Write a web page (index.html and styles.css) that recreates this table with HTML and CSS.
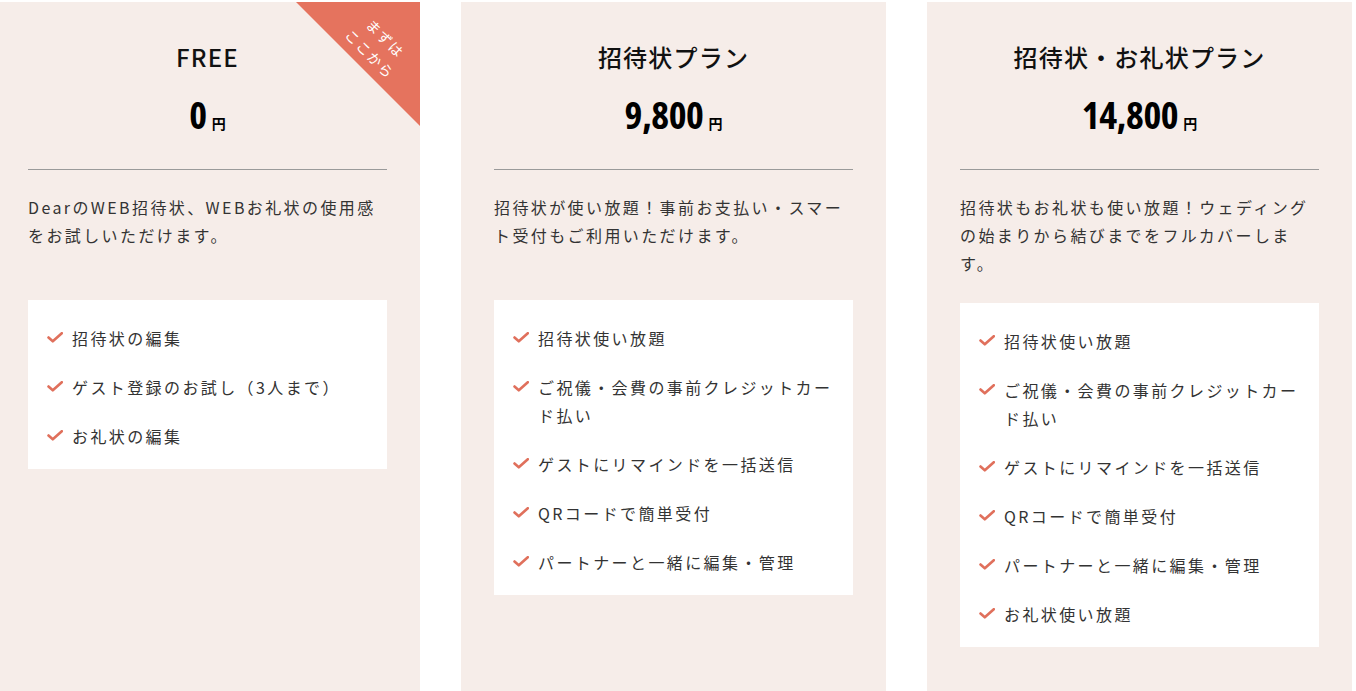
FILE: index.html
```html
<!DOCTYPE html>
<html lang="ja">
<head>
    <meta charset="UTF-8">
    <meta name="viewport" content="width=device-width, initial-scale=1.0">
    <title>料金プラン</title>
    <link rel="stylesheet" href="styles.css">
</head>
<body>

    <div class="plans">

        <!-- Free plan -->
        <section class="plan">
            <div class="ribbon"><span>まずは<br>ここから</span></div>
            <h2 class="plan-name">FREE</h2>
            <p class="plan-price"><span class="num">0</span><span class="yen">円</span></p>
            <hr class="divider">
            <p class="plan-desc">DearのWEB招待状、WEBお礼状の使用感をお試しいただけます。</p>
            <ul class="features">
                <li><svg class="check" viewBox="0 0 16 11"><path d="M1.5 5.5 L5.8 9.3 L14.8 1.2"/></svg><span>招待状の編集</span></li>
                <li><svg class="check" viewBox="0 0 16 11"><path d="M1.5 5.5 L5.8 9.3 L14.8 1.2"/></svg><span>ゲスト登録のお試し（3人まで）</span></li>
                <li><svg class="check" viewBox="0 0 16 11"><path d="M1.5 5.5 L5.8 9.3 L14.8 1.2"/></svg><span>お礼状の編集</span></li>
            </ul>
        </section>

        <!-- Invitation plan -->
        <section class="plan">
            <h2 class="plan-name">招待状プラン</h2>
            <p class="plan-price"><span class="num">9,800</span><span class="yen">円</span></p>
            <hr class="divider">
            <p class="plan-desc">招待状が使い放題！事前お支払い・スマート受付もご利用いただけます。</p>
            <ul class="features">
                <li><svg class="check" viewBox="0 0 16 11"><path d="M1.5 5.5 L5.8 9.3 L14.8 1.2"/></svg><span>招待状使い放題</span></li>
                <li><svg class="check" viewBox="0 0 16 11"><path d="M1.5 5.5 L5.8 9.3 L14.8 1.2"/></svg><span>ご祝儀・会費の事前クレジットカード払い</span></li>
                <li><svg class="check" viewBox="0 0 16 11"><path d="M1.5 5.5 L5.8 9.3 L14.8 1.2"/></svg><span>ゲストにリマインドを一括送信</span></li>
                <li><svg class="check" viewBox="0 0 16 11"><path d="M1.5 5.5 L5.8 9.3 L14.8 1.2"/></svg><span>QRコードで簡単受付</span></li>
                <li><svg class="check" viewBox="0 0 16 11"><path d="M1.5 5.5 L5.8 9.3 L14.8 1.2"/></svg><span>パートナーと一緒に編集・管理</span></li>
            </ul>
        </section>

        <!-- Invitation + thank-you plan -->
        <section class="plan">
            <h2 class="plan-name">招待状・お礼状プラン</h2>
            <p class="plan-price"><span class="num">14,800</span><span class="yen">円</span></p>
            <hr class="divider">
            <p class="plan-desc">招待状もお礼状も使い放題！ウェディングの始まりから結びまでをフルカバーします。</p>
            <ul class="features">
                <li><svg class="check" viewBox="0 0 16 11"><path d="M1.5 5.5 L5.8 9.3 L14.8 1.2"/></svg><span>招待状使い放題</span></li>
                <li><svg class="check" viewBox="0 0 16 11"><path d="M1.5 5.5 L5.8 9.3 L14.8 1.2"/></svg><span>ご祝儀・会費の事前クレジットカード払い</span></li>
                <li><svg class="check" viewBox="0 0 16 11"><path d="M1.5 5.5 L5.8 9.3 L14.8 1.2"/></svg><span>ゲストにリマインドを一括送信</span></li>
                <li><svg class="check" viewBox="0 0 16 11"><path d="M1.5 5.5 L5.8 9.3 L14.8 1.2"/></svg><span>QRコードで簡単受付</span></li>
                <li><svg class="check" viewBox="0 0 16 11"><path d="M1.5 5.5 L5.8 9.3 L14.8 1.2"/></svg><span>パートナーと一緒に編集・管理</span></li>
                <li><svg class="check" viewBox="0 0 16 11"><path d="M1.5 5.5 L5.8 9.3 L14.8 1.2"/></svg><span>お礼状使い放題</span></li>
            </ul>
        </section>

    </div>

</body>
</html>
```

FILE: styles.css
```css
/* Reset */
* {
    box-sizing: border-box;
    margin: 0;
    padding: 0;
}

body {
    font-family: "Noto Sans CJK JP", "Noto Sans", sans-serif;
    background: #fff;
    color: #222;
    overflow: hidden;
}

/* Plan row */
.plans {
    display: flex;
    gap: 41px;
    margin: 2px 0 0 -5px;
    min-height: calc(100vh - 2px);
}

.plan {
    position: relative;
    flex: none;
    width: 425px;
    background-color: #f6ede9;
    padding: 37px 33px 40px;
    overflow: hidden;
}

/* Corner ribbon */
.ribbon {
    position: absolute;
    top: 0;
    right: 0;
    width: 124px;
    height: 124px;
    background-color: #e5735e;
    clip-path: polygon(0 0, 100% 0, 100% 100%);
}

.ribbon span {
    position: absolute;
    left: 82px;
    top: 44px;
    transform: translate(-50%, -50%) rotate(45deg);
    color: #fff;
    font-size: 14px;
    line-height: 22px;
    letter-spacing: 0.12em;
    text-align: center;
    white-space: nowrap;
}

/* Heading + price */
.plan-name {
    font-size: 24px;
    font-weight: 500;
    line-height: 36px;
    letter-spacing: 0.05em;
    text-align: center;
    color: #111;
}

.plan-price {
    display: flex;
    justify-content: center;
    align-items: baseline;
    height: 38px;
    margin-top: 20px;
    color: #000;
}

.plan-price .num {
    font-family: "Open Sans", "Noto Sans", sans-serif;
    font-stretch: 75%;
    font-variation-settings: "wdth" 75;
    font-weight: 700;
    font-size: 38px;
    line-height: 38px;
    letter-spacing: -0.01em;
}

.plan-price .yen {
    font-size: 14px;
    font-weight: 700;
    line-height: 1;
    margin-left: 5px;
}

.divider {
    border: none;
    border-top: 1px solid #9a9a9a;
    margin-top: 36px;
}

/* Description */
.plan-desc {
    margin-top: 23px;
    min-height: 81px;
    font-size: 16px;
    line-height: 28px;
    letter-spacing: 0.15em;
    color: #333;
}

/* Feature list */
.features {
    list-style: none;
    margin-top: 26px;
    background-color: #fff;
    padding: 24px 16px 19px 19px;
}

.features li {
    display: flex;
    gap: 9px;
    font-size: 16px;
    line-height: 28px;
    letter-spacing: 0.15em;
    color: #333;
}

.features li + li {
    margin-top: 21px;
}

.check {
    flex: none;
    width: 16px;
    height: 11px;
    margin-top: 8px;
    fill: none;
    stroke: #e0705c;
    stroke-width: 2.6;
    stroke-linecap: round;
    stroke-linejoin: round;
}
```
